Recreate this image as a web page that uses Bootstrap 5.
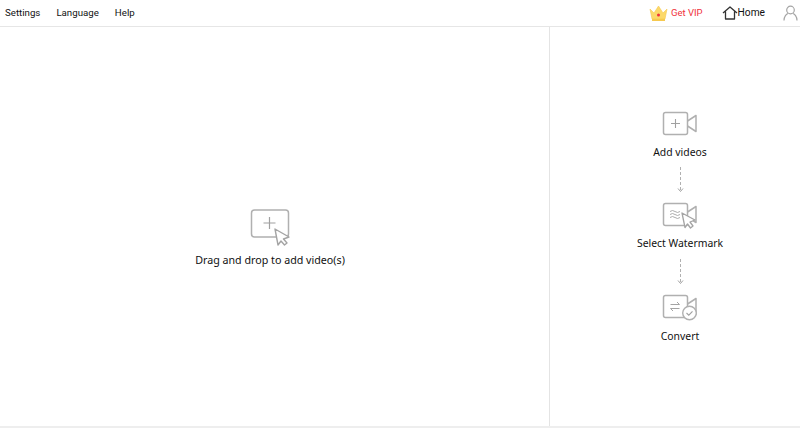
<!DOCTYPE html>
<html lang="en">
<head>
  <meta charset="UTF-8" />
  <title>Video Watermark</title>
  <link href="https://cdn.jsdelivr.net/npm/bootstrap@5.3.0/dist/css/bootstrap.min.css" rel="stylesheet" />
  <style>
    html, body {
      height: 441px;
      overflow: hidden;
      background: #fff;
    }

    body {
      font-family: "Noto Sans", "Liberation Sans", sans-serif;
      font-size: 10.4px;
      color: #111;
    }

    .top-bar {
      height: 27px;
      border-bottom: 1px solid #e6e6e6;
      padding: 0 2px 0 5px;
      font-family: Roboto, "Liberation Sans", sans-serif;
      font-size: 10.2px;
    }

    .menu-gap { gap: 16px; font-size: 9.7px; }

    .vip-text { color: #f0323c; margin-left: 3px; font-size: 9.5px; }
    .home-icon { margin-left: 19px; }
    .user-icon { margin-left: 18px; }

    .work-area {
      height: 401px;
      border-bottom: 2px solid #eeeeee;
    }

    .drop-zone { width: 549px; padding: 182px 9px 0 0; }

    .steps-pane {
      width: 251px;
      border-left: 1px solid #e4e4e4;
      padding: 84px 0 0 10px;
    }

    .step-label { line-height: 14px; margin-top: 8px; white-space: nowrap; }
    .label-tight { margin-top: 7px; }
    .drop-label { line-height: 14px; margin-top: 7px; font-size: 10.7px; }
    .step-arrow { display: block; margin: 8px 0 9px; }
    .arrow-low { margin-top: 9px; }
  </style>
</head>
<body>
  <div class="top-bar d-flex align-items-center justify-content-between">
    <div class="d-flex menu-gap">
      <span>Settings</span>
      <span>Language</span>
      <span>Help</span>
    </div>
    <div class="d-flex align-items-center">
      <svg width="19" height="17" viewBox="0 0 19 17">
        <path d="M1 4 L5 8 L9.5 1 L14 8 L18 4 L16 14 H3 Z" fill="#fcd96a" stroke="#f6c94f" stroke-width=".6" stroke-linejoin="round"/>
        <rect x="3" y="14" width="13" height="2" fill="#f6c94f"/>
        <circle cx="9.5" cy="10" r="1.5" fill="#f0323c"/>
      </svg>
      <span class="vip-text">Get VIP</span>
      <svg class="home-icon" width="16" height="14" viewBox="0 0 16 14">
        <path d="M1 7 L8 1 L15 7 M3.5 5.5 V13 H12.5 V5.5" fill="none" stroke="#333" stroke-width="1.3" stroke-linejoin="round"/>
      </svg>
      <span>Home</span>
      <svg class="user-icon" width="15" height="16" viewBox="0 0 15 16">
        <circle cx="7.5" cy="5" r="3.8" fill="none" stroke="#a5a5a5" stroke-width="1.2"/>
        <path d="M1 15.5 C1 11.5 3.5 9 5 8.5 M14 15.5 C14 11.5 11.5 9 10 8.5" fill="none" stroke="#a5a5a5" stroke-width="1.2"/>
      </svg>
    </div>
  </div>

  <div class="work-area d-flex">
    <div class="drop-zone d-flex flex-column align-items-center">
      <svg width="40" height="37" viewBox="0 0 40 37">
        <rect x="1.5" y="1" width="37" height="27" rx="3" fill="#fff" stroke="#b0b0b0" stroke-width="1.5"/>
        <path d="M19.5 8 V20 M13.5 14 H25.5" stroke="#a0a0a0" stroke-width="1.2"/>
        <path d="M25 20 L39 28 L33.5 30 L37 34 L34.5 36 L31 32 L28 36 Z" fill="#fff" stroke="#a4a4a4" stroke-width="1.4" stroke-linejoin="round"/>
      </svg>
      <div class="drop-label">Drag and drop to add video(s)</div>
    </div>

    <div class="steps-pane d-flex flex-column align-items-center">
      <svg width="36" height="26" viewBox="0 0 36 26">
        <rect x="1.5" y="1.5" width="24" height="22" rx="2" fill="none" stroke="#b0b0b0" stroke-width="1.5"/>
        <path d="M25.5 10 L34 4.5 V20.5 L25.5 15" fill="none" stroke="#b0b0b0" stroke-width="1.5" stroke-linejoin="round"/>
        <path d="M13.5 8 V17 M9 12.5 H18" stroke="#a0a0a0" stroke-width="1.1"/>
      </svg>
      <div class="step-label">Add videos</div>
      <svg class="step-arrow" width="7" height="26" viewBox="0 0 7 26">
        <path d="M3.5 0 V24" stroke="#b0b0b0" stroke-dasharray="3 2"/>
        <path d="M1 21.5 L3.5 24.5 L6 21.5" fill="none" stroke="#a4a4a4"/>
      </svg>

      <svg width="36" height="27" viewBox="0 0 36 27">
        <rect x="1.5" y="1.5" width="24" height="22" rx="2" fill="none" stroke="#b0b0b0" stroke-width="1.5"/>
        <path d="M25.5 10 L34 4.5 V20.5 L25.5 15" fill="none" stroke="#b0b0b0" stroke-width="1.5" stroke-linejoin="round"/>
        <path d="M8 9.5 Q10.5 7.5 13 9.5 T18 9.5 M8 12.5 Q10.5 10.5 13 12.5 T18 12.5 M8 15.5 Q10.5 13.5 13 15.5 T18 15.5" fill="none" stroke="#a4a4a4" stroke-width=".9"/>
        <path d="M20 11 L33 18 L28 20 L31 24 L28.5 26 L25.5 22 L23 25.5 Z" fill="#fff" stroke="#a4a4a4" stroke-width="1.3" stroke-linejoin="round"/>
      </svg>
      <div class="step-label label-tight">Select Watermark</div>
      <svg class="step-arrow arrow-low" width="7" height="26" viewBox="0 0 7 26">
        <path d="M3.5 0 V24" stroke="#b0b0b0" stroke-dasharray="3 2"/>
        <path d="M1 21.5 L3.5 24.5 L6 21.5" fill="none" stroke="#a4a4a4"/>
      </svg>

      <svg width="36" height="27" viewBox="0 0 36 27">
        <rect x="1.5" y="1.5" width="24" height="22" rx="2" fill="none" stroke="#b0b0b0" stroke-width="1.5"/>
        <path d="M25.5 10 L34 4.5 V20.5 L25.5 15" fill="none" stroke="#b0b0b0" stroke-width="1.5" stroke-linejoin="round"/>
        <path d="M8.5 10.5 H17.5 L15 8 M17.5 14.5 H8.5 L11 17" fill="none" stroke="#a4a4a4" stroke-width="1"/>
        <circle cx="27.5" cy="19" r="6.8" fill="#fff" stroke="#b0b0b0" stroke-width="1.4"/>
        <path d="M24.5 19 L26.8 21.2 L30.5 17.3" fill="none" stroke="#a0a0a0" stroke-width="1.1"/>
      </svg>
      <div class="step-label">Convert</div>
    </div>
  </div>
  <script src="https://cdn.jsdelivr.net/npm/bootstrap@5.3.0/dist/js/bootstrap.bundle.min.js"></script>
</body>
</html>
